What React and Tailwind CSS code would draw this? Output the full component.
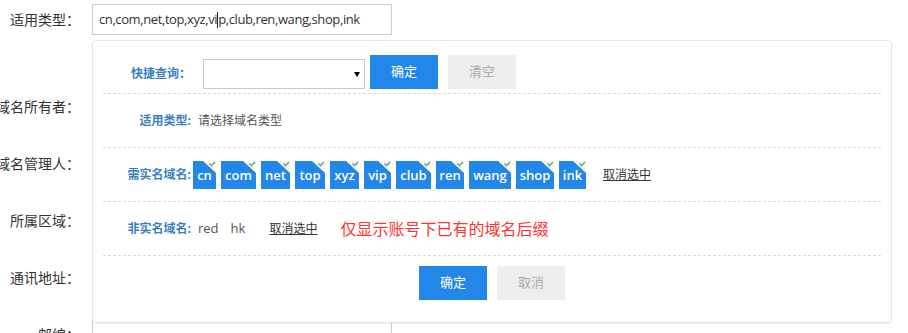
const FONT = "[font-family:'Open_Sans','Noto_Sans_CJK_SC',sans-serif]";

const formRows = ["域名所有者：", "域名管理人：", "所属区域：", "通讯地址：", "邮编："];

const realNameTags = [
  { name: "cn", w: "w-[23px]" },
  { name: "com", w: "w-[35px]" },
  { name: "net", w: "w-[29px]" },
  { name: "top", w: "w-[30px]" },
  { name: "xyz", w: "w-[29px]" },
  { name: "vip", w: "w-[27px]" },
  { name: "club", w: "w-[35px]" },
  { name: "ren", w: "w-[28px]" },
  { name: "wang", w: "w-[42px]" },
  { name: "shop", w: "w-[38px]" },
  { name: "ink", w: "w-[27px]" },
];

// selected suffix chip with the folded check corner
const Tag = ({ name, w }) => (
  <div
    className={`relative ${w} h-[28px] bg-[#2387e9] text-white text-[13px] font-semibold flex items-center justify-center`}
  >
    <span className="mt-[2px]">{name}</span>
    <svg
      className="absolute top-0 right-0"
      width="13"
      height="12"
      viewBox="0 0 13 12"
    >
      <polygon points="0,0 13,0 13,12" fill="#fdf8d2" />
      <path
        d="M6.5 2.5 L8.5 4.5 L12 1"
        fill="none"
        stroke="#5aa7ee"
        strokeWidth="1.6"
      />
    </svg>
  </div>
);

const PanelLabel = ({ children }) => (
  <div className="w-[88px] shrink-0 text-right text-[12px] font-bold text-[#3a7fc0]">
    {children}
  </div>
);

export default function App() {
  return (
    <div className={`relative w-[908px] h-[333px] overflow-hidden bg-white ${FONT}`}>
      {/* underlying form */}
      <div className="pt-[4px] flex items-center">
        <div className="w-[80px] flex justify-end text-[14px] text-[#333] whitespace-nowrap">
          适用类型：
        </div>
        <div className="ml-[12px] w-[300px] h-[31px] border border-[#ccc] flex items-center px-[6px] text-[13px] tracking-[-0.4px] text-[#333] whitespace-nowrap">
          cn,com,net,top,xyz,vi
          <span className="inline-block w-px h-[16px] bg-[#222]" />
          p,club,ren,wang,shop,ink
        </div>
      </div>
      <div className="mt-[43px]">
        {formRows.map((label) => (
          <div key={label} className="h-[57px] flex items-center">
            <div className="w-[80px] flex justify-end text-[14px] text-[#333] whitespace-nowrap">
              {label}
            </div>
            <div className="ml-[12px] w-[300px] h-[31px] border border-[#ccc]" />
          </div>
        ))}
      </div>

      {/* quick select popover */}
      <div className="absolute left-[92px] top-[40px] w-[800px] h-[283px] bg-white border border-[#e6e6e6] rounded-[4px] shadow-[0_1px_2px_rgba(0,0,0,0.06)] px-[10px]">
        <div className="pt-[14px] pb-[4px] flex items-end border-b border-dashed border-[#dcdcdc]">
          <div className="h-[30px] flex items-center">
            <PanelLabel>快捷查询：</PanelLabel>
          </div>
          <div className="ml-[12px] w-[162px] h-[30px] border border-[#c8c8c8] flex items-center justify-end pr-[4px]">
            <span className="w-0 h-0 border-x-[3px] border-x-transparent border-t-[5px] border-t-black" />
          </div>
          <button className="ml-[5px] w-[68px] h-[34px] bg-[#2387e9] text-white text-[13px]">
            确定
          </button>
          <button className="ml-[10px] w-[68px] h-[34px] bg-[#eeeeee] text-[#aaa] text-[13px]">
            清空
          </button>
        </div>

        <div className="h-[54px] flex items-center border-b border-dashed border-[#dcdcdc]">
          <PanelLabel>适用类型:</PanelLabel>
          <span className="ml-[7px] text-[12px] text-[#555]">请选择域名类型</span>
        </div>

        <div className="h-[54px] flex items-center border-b border-dashed border-[#dcdcdc]">
          <PanelLabel>需实名域名:</PanelLabel>
          <div className="ml-[2px] flex gap-[5px]">
            {realNameTags.map((t) => (
              <Tag key={t.name} {...t} />
            ))}
          </div>
          <span className="ml-[17px] text-[12px] text-[#333] underline">取消选中</span>
        </div>

        <div className="h-[54px] flex items-center border-b border-dashed border-[#dcdcdc]">
          <PanelLabel>非实名域名:</PanelLabel>
          <span className="ml-[7px] text-[13px] text-[#555]">red</span>
          <span className="ml-[12px] text-[13px] text-[#555]">hk</span>
          <span className="ml-[24px] text-[12px] text-[#333] underline">取消选中</span>
          <span className="ml-[23px] text-[16px] text-[#f33]">仅显示账号下已有的域名后缀</span>
        </div>

        <div className="pt-[10px] flex justify-center gap-[10px]">
          <button className="w-[68px] h-[34px] bg-[#2387e9] text-white text-[13px]">
            确定
          </button>
          <button className="w-[68px] h-[34px] bg-[#eeeeee] text-[#aaa] text-[13px]">
            取消
          </button>
        </div>
      </div>
    </div>
  );
}
